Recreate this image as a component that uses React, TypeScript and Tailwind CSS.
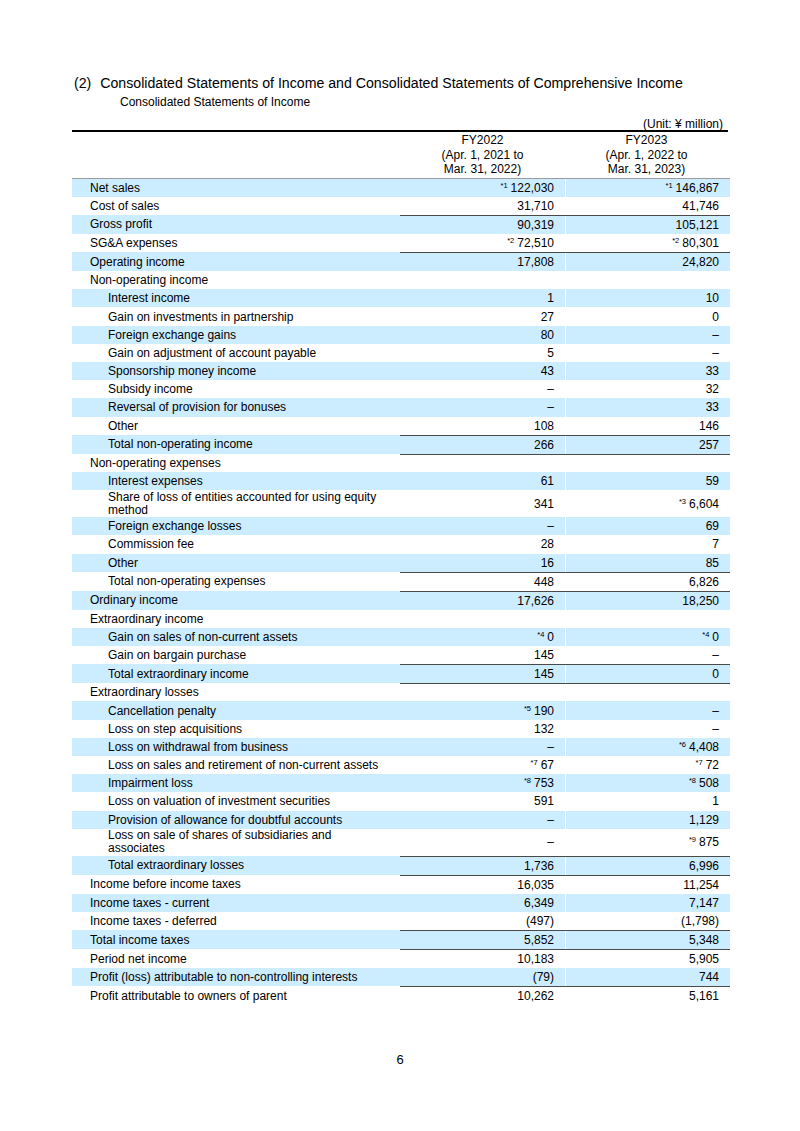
type Row = {
  label: string
  a: string
  b: string
  aNote?: string
  bNote?: string
  level?: 0 | 1
  shade?: boolean
  line?: boolean
  wrap?: boolean
}

const rows: Row[] = [
  { label: "Net sales", a: "122,030", aNote: "*1", b: "146,867", bNote: "*1", shade: true },
  { label: "Cost of sales", a: "31,710", b: "41,746" },
  { label: "Gross profit", a: "90,319", b: "105,121", shade: true, line: true },
  { label: "SG&A expenses", a: "72,510", aNote: "*2", b: "80,301", bNote: "*2" },
  { label: "Operating income", a: "17,808", b: "24,820", shade: true, line: true },
  { label: "Non-operating income", a: "", b: "" },
  { label: "Interest income", a: "1", b: "10", level: 1, shade: true },
  { label: "Gain on investments in partnership", a: "27", b: "0", level: 1 },
  { label: "Foreign exchange gains", a: "80", b: "–", level: 1, shade: true },
  { label: "Gain on adjustment of account payable", a: "5", b: "–", level: 1 },
  { label: "Sponsorship money income", a: "43", b: "33", level: 1, shade: true },
  { label: "Subsidy income", a: "–", b: "32", level: 1 },
  { label: "Reversal of provision for bonuses", a: "–", b: "33", level: 1, shade: true },
  { label: "Other", a: "108", b: "146", level: 1 },
  { label: "Total non-operating income", a: "266", b: "257", level: 1, shade: true, line: true },
  { label: "Non-operating expenses", a: "", b: "", line: true },
  { label: "Interest expenses", a: "61", b: "59", level: 1, shade: true },
  { label: "Share of loss of entities accounted for using equity method", a: "341", b: "6,604", bNote: "*3", level: 1, wrap: true },
  { label: "Foreign exchange losses", a: "–", b: "69", level: 1, shade: true },
  { label: "Commission fee", a: "28", b: "7", level: 1 },
  { label: "Other", a: "16", b: "85", level: 1, shade: true },
  { label: "Total non-operating expenses", a: "448", b: "6,826", level: 1, line: true },
  { label: "Ordinary income", a: "17,626", b: "18,250", shade: true, line: true },
  { label: "Extraordinary income", a: "", b: "" },
  { label: "Gain on sales of non-current assets", a: "0", aNote: "*4", b: "0", bNote: "*4", level: 1, shade: true },
  { label: "Gain on bargain purchase", a: "145", b: "–", level: 1 },
  { label: "Total extraordinary income", a: "145", b: "0", level: 1, shade: true, line: true },
  { label: "Extraordinary losses", a: "", b: "", line: true },
  { label: "Cancellation penalty", a: "190", aNote: "*5", b: "–", level: 1, shade: true },
  { label: "Loss on step acquisitions", a: "132", b: "–", level: 1 },
  { label: "Loss on withdrawal from business", a: "–", b: "4,408", bNote: "*6", level: 1, shade: true },
  { label: "Loss on sales and retirement of non-current assets", a: "67", aNote: "*7", b: "72", bNote: "*7", level: 1 },
  { label: "Impairment loss", a: "753", aNote: "*8", b: "508", bNote: "*8", level: 1, shade: true },
  { label: "Loss on valuation of investment securities", a: "591", b: "1", level: 1 },
  { label: "Provision of allowance for doubtful accounts", a: "–", b: "1,129", level: 1, shade: true },
  { label: "Loss on sale of shares of subsidiaries and associates", a: "–", b: "875", bNote: "*9", level: 1, wrap: true },
  { label: "Total extraordinary losses", a: "1,736", b: "6,996", level: 1, shade: true, line: true },
  { label: "Income before income taxes", a: "16,035", b: "11,254", line: true },
  { label: "Income taxes - current", a: "6,349", b: "7,147", shade: true },
  { label: "Income taxes - deferred", a: "(497)", b: "(1,798)" },
  { label: "Total income taxes", a: "5,852", b: "5,348", shade: true, line: true },
  { label: "Period net income", a: "10,183", b: "5,905", line: true },
  { label: "Profit (loss) attributable to non-controlling interests", a: "(79)", b: "744", shade: true },
  { label: "Profit attributable to owners of parent", a: "10,262", b: "5,161", line: true },
]

function Amount({ value, note, shade, right }: { value: string; note?: string; shade?: boolean; right?: boolean }) {
  return (
    <div
      className={`flex items-center justify-end pr-[11px] ${right ? "w-[164px]" : "w-[165px]"} ${shade ? "bg-[#ccecff]" : ""}`}
    >
      {note && <span className="mr-[3px] -mt-[5px] text-[7.5px] leading-[7px]">{note}</span>}
      <span>{value}</span>
    </div>
  )
}

export default function App() {
  return (
    <div className="min-h-[1131px] w-[800px] bg-white text-black font-['Liberation_Sans',Arial,sans-serif]">
      <div className="pt-[75px] pl-[74px] text-[14.15px] leading-[17px]">
        <span>(2)</span>
        <span className="ml-[9px]">Consolidated Statements of Income and Consolidated Statements of Comprehensive Income</span>
      </div>
      <div className="mt-[3px] pl-[120px] text-[12px] leading-[14px]">Consolidated Statements of Income</div>

      <div className="ml-[72px] mt-[10px] w-[658px] text-[12px]">
        <div className="pr-[7px] text-right leading-[11px]">(Unit: ¥ million)</div>
        <div className="flex w-[656px] border-t-2 border-black">
          <div className="w-[328px]" />
          <div className="w-[165px] py-px text-center leading-[14.5px]">
            FY2022
            <br />
            (Apr. 1, 2021 to
            <br />
            Mar. 31, 2022)
          </div>
          <div className="w-[163px] py-px text-center leading-[14.5px]">
            FY2023
            <br />
            (Apr. 1, 2022 to
            <br />
            Mar. 31, 2023)
          </div>
        </div>

        <div className="border-t border-[#9a9a9a]">
          {rows.map((r, i) => (
            <div key={i} className="flex">
              <div
                className={`flex w-[328px] items-center ${r.wrap ? "min-h-[27px]" : "min-h-[18.2px]"} ${
                  r.level === 1 ? "pl-[36px]" : "pl-[18px]"
                } ${r.shade ? "bg-[#ccecff]" : ""}`}
              >
                <span className={r.wrap ? "max-w-[276px] leading-[13px]" : "leading-[14px]"}>{r.label}</span>
              </div>
              <div className={`flex gap-px ${r.line ? "border-t border-[#4a4a4a]" : ""}`}>
                <Amount value={r.a} note={r.aNote} shade={r.shade} />
                <Amount value={r.b} note={r.bNote} shade={r.shade} right />
              </div>
            </div>
          ))}
        </div>
      </div>

      <div className="mt-[47px] text-center text-[13px] leading-[15px]">6</div>
    </div>
  )
}
